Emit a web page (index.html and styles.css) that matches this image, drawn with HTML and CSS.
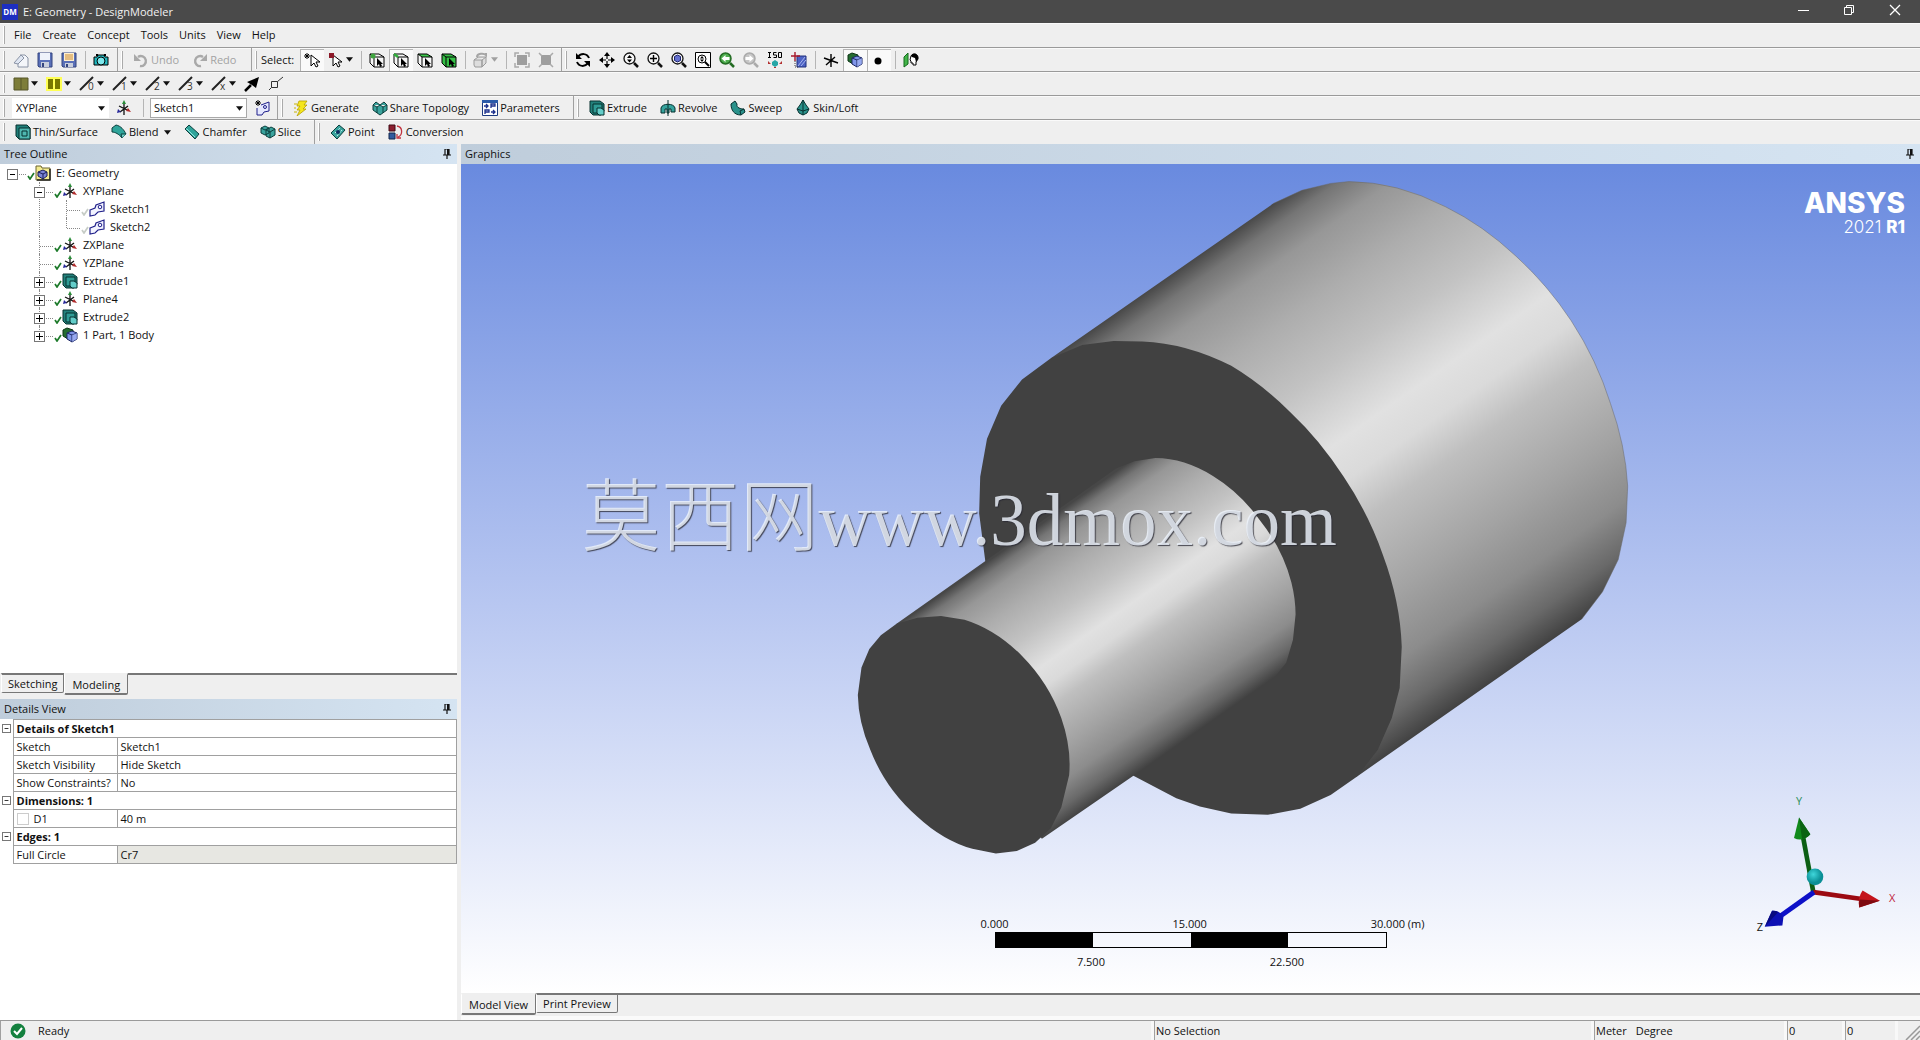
FILE: index.html
```html
<!DOCTYPE html>
<html lang="en">
<head>
<meta charset="utf-8">
<title>E: Geometry - DesignModeler</title>
<link rel="stylesheet" href="styles.css">
</head>
<body>
<svg class="sprite" aria-hidden="true">
  <defs>
    <symbol id="arrow" viewBox="0 0 8 5"><path d="M0 0h8L4 5z" fill="currentColor"/></symbol>
    <symbol id="new" viewBox="0 0 16 16"><path d="M7 3h5l3 3v9H5v-4" fill="#f4f6fa" stroke="#8a93a5"/><path d="M1 11 8 3l3 3-6 6z" fill="#dfe6f2" stroke="#8a93a5"/></symbol>
    <symbol id="save" viewBox="0 0 16 16"><path d="M1 1h14v14H2l-1-1z" fill="#5a70b8" stroke="#34457f"/><path d="M3 1h10v7H3z" fill="#eef2fa"/><path d="M4 10h8v5H4z" fill="#c9cfdd"/><path d="M5 11h2v4H5z" fill="#34457f"/></symbol>
    <symbol id="saveas" viewBox="0 0 16 16"><path d="M1 1h14v14H2l-1-1z" fill="#5a70b8" stroke="#34457f"/><path d="M3 1h10v8H3z" fill="#fff0cf"/><path d="M4 3h8M4 5h8M4 7h8" stroke="#c98a35"/><path d="M4 11h8v4H4z" fill="#c9cfdd"/><path d="M5 12h2v3H5z" fill="#34457f"/></symbol>
    <symbol id="camera" viewBox="0 0 16 16"><path d="M1 5h3l1-2h6l1 2h3v8H1z" fill="#20b6bd" stroke="#000"/><circle cx="8" cy="9" r="4" fill="#7de8ec" stroke="#000"/><path d="M3 3h2M11 3h2" stroke="#000" stroke-width="2"/></symbol>
    <symbol id="undo" viewBox="0 0 16 16"><path d="M5 5a5 5 0 1 1 2 9" fill="none" stroke="#a9a9a9" stroke-width="2.4"/><path d="M1 2v7h7z" fill="#a9a9a9"/></symbol>
    <symbol id="redo" viewBox="0 0 16 16"><path d="M11 5a5 5 0 1 0-2 9" fill="none" stroke="#a9a9a9" stroke-width="2.4"/><path d="M15 2v7H8z" fill="#a9a9a9"/></symbol>
    <symbol id="cursor" viewBox="0 0 16 16"><path d="M7 3v11l3-3 2 4 2-1-2-4h4z" fill="#fff" stroke="#000"/><path d="M3 1v6M0 4h6M1 2l4 4M5 2 1 6" stroke="#000"/></symbol>
    <symbol id="cursor-box" viewBox="0 0 16 16"><path d="M5 3v11l3-3 2 4 2-1-2-4h4z" fill="#fff" stroke="#000"/><path d="M1 1h5v5H1z" fill="#8c1828"/></symbol>
    <symbol id="wirecube" viewBox="0 0 16 16"><path d="M1 2 5 5h10v10H5l-4-4zM1 2h9l5 3M5 5v10" fill="none" stroke="#000"/></symbol>
    <symbol id="cube-pointer" viewBox="0 0 16 16"><path d="M8 6v8l2-2 1 3 2-1-1-2h2z" fill="#000"/></symbol>
    <symbol id="sel-vertex" viewBox="0 0 16 16"><path d="M1 2h9l5 3v10H5l-4-4z" fill="#f6f6f6"/><use href="#wirecube"/><use href="#cube-pointer"/><circle cx="4" cy="4" r="2.500" fill="#3ea53e"/></symbol>
    <symbol id="sel-edge" viewBox="0 0 16 16"><path d="M1 2h9l5 3v10H5l-4-4z" fill="#f6f6f6"/><use href="#wirecube"/><use href="#cube-pointer"/><path d="m1 2 4 3" stroke="#2fae3a" stroke-width="2.500"/></symbol>
    <symbol id="sel-face" viewBox="0 0 16 16"><path d="M1 2h9l5 3v10H5l-4-4z" fill="#f6f6f6"/><path d="M1 2h9l5 3H5z" fill="#3cc84c"/><use href="#wirecube"/><use href="#cube-pointer"/></symbol>
    <symbol id="sel-body" viewBox="0 0 16 16"><path d="M1 2h9l5 3v10H5l-4-4z" fill="#35c046"/><use href="#wirecube"/><use href="#cube-pointer"/></symbol>
    <symbol id="greycube" viewBox="0 0 16 16"><path d="M1 8h8v7H2l-1-2zM9 8l4-3v6l-4 4zM1 8l4-3h8" fill="#ddd" stroke="#9b9b9b"/><path d="M4 5c0-4 7-4 9-2V1" fill="none" stroke="#a5a5a5" stroke-width="2"/></symbol>
    <symbol id="expand" viewBox="0 0 16 16"><path d="M3 3h10v10H3z" fill="#9e9e9e"/><path d="M1 5V1h4M11 1h4v4M15 11v4h-4M5 15H1v-4" fill="none" stroke="#aaa" stroke-width="1.500"/></symbol>
    <symbol id="shrink" viewBox="0 0 16 16"><path d="M3 3h10v10H3z" fill="#9e9e9e"/><path d="m1 1 3 3M15 1l-3 3M15 15l-3-3M1 15l3-3" stroke="#aaa" stroke-width="1.500"/></symbol>
    <symbol id="rotate" viewBox="0 0 16 16"><path d="M14 6C12 1 6 1 3 5M2 10c2 5 8 5 11 1" fill="none" stroke="#000" stroke-width="2"/><path d="M1 1v6h6zM15 15V9H9z"/></symbol>
    <symbol id="pan" viewBox="0 0 16 16"><path d="M8 2v12M2 8h12" stroke="#000" stroke-width="1.200" stroke-dasharray="5 2"/><path d="m8 0 3 4H5zM8 16l3-4H5zM0 8l4-3v6zM16 8l-4-3v6z"/></symbol>
    <symbol id="lens" viewBox="0 0 16 16"><circle cx="6.500" cy="6.500" r="5.500" fill="#f7f7f7" stroke="currentColor" stroke-width="1.300"/><path d="m11 11 4 4" stroke="currentColor" stroke-width="2.500"/></symbol>
    <symbol id="zoom" viewBox="0 0 16 16"><use href="#lens"/><path d="m6.500 3 2.500 3H4zM6.500 10.500l2.500-3H4z"/></symbol>
    <symbol id="zoomin" viewBox="0 0 16 16"><use href="#lens"/><path d="M6.500 3v7M3 6.500h7" stroke="#000" stroke-width="1.400"/></symbol>
    <symbol id="zoomfit" viewBox="0 0 16 16"><use href="#lens"/><path d="m6.500 3 3 1.500v4l-3 1.500-3-1.500v-4z" fill="#6470cf" stroke="#1c2370"/></symbol>
    <symbol id="zoombox" viewBox="0 0 16 16"><path d="M.5.5h15v15H.5z" fill="#fff" stroke="#000"/><circle cx="7" cy="7" r="4" fill="none" stroke="#000"/><path d="m10 10 4 4" stroke="#000" stroke-width="2"/><path d="m7 4 2 2.500H5zM7 10l2-2.500H5z"/></symbol>
    <symbol id="zoomback" viewBox="0 0 16 16"><circle cx="6.500" cy="6.500" r="5.500" fill="#4fae4f" stroke="#236b23" stroke-width="1.500"/><path d="m11 11 4 4" stroke="#236b23" stroke-width="2.500"/><path d="m2.500 6.500 4-3.500v2h4v3h-4v2z" fill="#fff"/></symbol>
    <symbol id="zoomfwd" viewBox="0 0 16 16"><circle cx="6.500" cy="6.500" r="5.500" fill="#c6c6c6" stroke="#aaa" stroke-width="1.500"/><path d="m11 11 4 4" stroke="#aaa" stroke-width="2.500"/><path d="M10.500 6.500 6.500 3v2h-4v3h4v2z" fill="#fff"/></symbol>
    <symbol id="iso" viewBox="0 0 16 16"><path d="M1 .5h3M1 5.500h3M2.500 0v6M9.500.5h-3v2.500h3v2.500h-3M11.500.5h3v5h-3z" fill="none" stroke="#000"/><path d="m8 8 3 2v3l-3 2-3-2v-3z" fill="#26a7a7"/><path d="M1 9v3h3zM12 12h3V9zM7 15h2v1H7z" fill="#b33030"/></symbol>
    <symbol id="lookat" viewBox="0 0 16 16"><path d="M6 4h9v11H6z" fill="#4c62c4" stroke="#20307c"/><path d="m7 14 7-9M10 14l5-6" stroke="#a9b6ee"/><path d="M4 0v9M0 4h9" stroke="#a8192c" stroke-width="1.400"/><path d="M4 9v6h3" fill="none" stroke="#444" stroke-dasharray="1 1"/></symbol>
    <symbol id="axes-black" viewBox="0 0 16 16"><path d="M8 2v13M1 6l14 5M3 13l9-8" stroke="#000" stroke-width="1.400"/></symbol>
    <symbol id="parts" viewBox="0 0 16 16"><path d="M1 3 5 1l6 2v7l-5 2-5-3z" fill="#246b31" stroke="#0c3515"/><path d="m5 6 5-2 5 2v6l-5 3-5-3z" fill="#7f95e8" stroke="#1c2765"/><path d="m5 6 5 2 5-2M10 8v7" fill="none" stroke="#1c2765"/><path d="m10 8 5-2v6l-5 3z" fill="#a9b9f6" fill-opacity=".6"/></symbol>
    <symbol id="dot" viewBox="0 0 16 16"><circle cx="7" cy="9" r="3.500"/></symbol>
    <symbol id="face-view" viewBox="0 0 16 16"><path d="m1 5 4-4v11l-4 3z" fill="#43b549" stroke="#156b1d"/><path d="M8 4c2-4 8-2 7 3l-2 3v3h-3v-2H8V9l-1-1z" fill="#fff" stroke="#000"/><path d="M8 4c2-4 8-2 7 3l-2 3-1-4-3-1z"/></symbol>
    <symbol id="olive" viewBox="0 0 16 16"><path d="M1 2h14v12H1z" fill="#7d7d39" stroke="#57572a"/><path d="M8 2v12" stroke="#57572a"/></symbol>
    <symbol id="olive-y" viewBox="0 0 16 16"><path d="M0 1h16v14H0z" fill="#ffff55"/><path d="M2 3h5v10H2zM9 3h5v10H9z" fill="#777700"/></symbol>
    <symbol id="slash" viewBox="0 0 16 16"><path d="M1 14 14 1" stroke="#222" stroke-width="2"/></symbol>
    <symbol id="dart" viewBox="0 0 16 16"><path d="m1 15 6-6" stroke="#000" stroke-width="2.500"/><path d="M15 1 12 12 8 9 3 6z"/></symbol>
    <symbol id="node" viewBox="0 0 16 16"><path d="M3.500 5.500h6v6h-6zM9.500 5.500 15 1M1 14l2.500-2.500" fill="none" stroke="#333"/></symbol>
    <symbol id="axes" viewBox="0 0 16 16"><path d="M8 3v12M3 6l8 4M4 12l8-6" stroke="#111" stroke-width="1.300"/><path d="m8 0 2 4H6z" fill="#2a8c38"/><path d="m15 12-5-1 2-3z" fill="#b02a2a"/><path d="m1 13 1-4 3 3z" fill="#28289a"/></symbol>
    <symbol id="newsketch" viewBox="0 0 16 16"><path d="m7 5 8-3v9l-5 1-2 3H3V8" fill="#e5e8ff" stroke="#20208a"/><circle cx="11" cy="7" r="1.500" fill="none" stroke="#20208a"/><path d="M4 0v6M1 3h6M2 1l4 4M6 1 2 5" stroke="#000"/></symbol>
    <symbol id="sketch" viewBox="0 0 16 16"><path d="M1 9l5-2 1-3 8-3v9l-6 1-3 3-5 1z" fill="#f3f4ff" stroke="#20208a" stroke-width="1.200"/><circle cx="11" cy="6" r="1.800" fill="none" stroke="#20208a"/></symbol>
    <symbol id="bolt" viewBox="0 0 16 16"><path d="M6 1h8l-3 4h3l-4 4h3l-9 7 3-6H4l3-4H4z" fill="#f5e61c" stroke="#b59e00" stroke-width=".8"/><path d="M1 4h3M1 8h2M1 12h3" stroke="#c8b400"/></symbol>
    <symbol id="share" viewBox="0 0 16 16"><path d="m1 5 3-3 4 3 4-3 3 3v5l-7 5-7-5zM1 5l4 2 3-2 3 2 4-2M5 7v6M11 7v6" fill="#3aa39d" stroke="#0b3f3d"/></symbol>
    <symbol id="params" viewBox="0 0 16 16"><path d="M.5.5h15v15H.5z" fill="#fff" stroke="#1c3a80"/><path d="M0 0h16v3H0z" fill="#2b5aa8"/><path d="M2 6h4M4 4l2 2-2 2M9 8V4h4v2H9M3 14v-4h4v2H3M9 12h4m-2-2 2 2-2 2" fill="none" stroke="#1b2f8c" stroke-width="1.300"/></symbol>
    <symbol id="extrude" viewBox="0 0 16 16"><path d="M1 1h10l4 3v7l-3 4H4l-3-3z" fill="#23807b" stroke="#06302f"/><path d="M4 4h9v9H4z" fill="#2f9c95" stroke="#06302f"/><path d="M8 8h4l3 2v5h-5l-2-2z" fill="#63cdc9" stroke="#06302f"/></symbol>
    <symbol id="thin" viewBox="0 0 16 16"><path d="M1 1h11l3 3v11H4l-3-3z" fill="#1f7f79" stroke="#06302f"/><path d="M4 4h11v11H4zM7 7h5v5H7z" fill="#4fb7b0" stroke="#06302f"/></symbol>
    <symbol id="revolve" viewBox="0 0 16 16"><path d="M1 8c1-5 13-5 14 0v4h-4V9H9v4H7V9H5v4H1z" fill="#35a39d" stroke="#06302f"/><path d="M8 0v16" stroke="#06302f"/></symbol>
    <symbol id="sweep" viewBox="0 0 16 16"><path d="m1 4 4-3 2 3c-1 4 4 5 7 5l1 3-4 3C4 15 1 10 1 4z" fill="#2a928b" stroke="#06302f"/><path d="m11 15-1-4 4-2" fill="none" stroke="#06302f"/></symbol>
    <symbol id="loft" viewBox="0 0 16 16"><path d="m8 0 3 5 3 4-2 4-4 2-4-2-2-4 3-4z" fill="#2a928b" stroke="#06302f"/><path d="M8 0v15M2 9l6 2 6-2" fill="none" stroke="#06302f"/></symbol>
    <symbol id="blend" viewBox="0 0 16 16"><path d="m1 4 4-3c5 1 8 5 10 9l-4 4C8 10 4 8 1 8z" fill="#2fa49a" stroke="#0b3f3d"/><path d="m11 14-1-4h5" fill="#74d6cf" stroke="#0b3f3d"/></symbol>
    <symbol id="chamfer" viewBox="0 0 16 16"><path d="m1 5 4-4 10 9-4 5z" fill="#2fa49a" stroke="#0b3f3d"/><path d="M2 5h1l8 8" fill="none" stroke="#8fe3dc"/></symbol>
    <symbol id="slice" viewBox="0 0 16 16"><path d="m1 4 4-2 4 2v5l-4 2-4-2zM6 6l5-3 4 2v6l-5 3-4-2z" fill="#3aa39d" stroke="#0b3f3d"/><path d="m1 4 4 2 4-2M6 6l4 2 5-3M10 8v6" fill="none" stroke="#0b3f3d"/></symbol>
    <symbol id="point" viewBox="0 0 16 16"><path d="m1 9 8-8 6 5-8 9z" fill="#3aa39d" stroke="#0b3f3d"/><path d="m5 9 5-5M7 12l5-6" stroke="#c5f2ee" stroke-dasharray="2 1"/><circle cx="8" cy="8" r="2" fill="#0c2c60"/></symbol>
    <symbol id="conversion" viewBox="0 0 16 16"><path d="M1 1h6v6H1z" fill="#8c1f30" stroke="#410a14"/><path d="M1 9h6v6H1z" fill="#315a9e" stroke="#14264c"/><path d="M9 2c6 1 6 9 1 11M13 14H9v-4" fill="none" stroke="#c23440" stroke-width="1.300"/></symbol>
    <symbol id="model" viewBox="0 0 16 16"><path d="M1 3V1h5l1 2h8v12H1z" fill="#f3eb8f" stroke="#6b6430"/><path d="M2 15h13V4" fill="none" stroke="#222" stroke-width="1.500"/><path d="m3 7 5-2 4 2v4l-4 3-5-3z" fill="#7b84d6" stroke="#1a1f5a"/><path d="m3 7 5 2 4-2M8 9v5" fill="none" stroke="#1a1f5a"/></symbol>
    <symbol id="check" viewBox="0 0 8 8"><path d="m1 4 2 3 4-6" fill="none" stroke="currentColor" stroke-width="1.700"/></symbol>
    <symbol id="pin" viewBox="0 0 8 10"><path d="M2 0h4v6H2zM0 6h8M4 6v4" fill="none" stroke="#111" stroke-width="1.200"/><path d="M4 0h2v6H4z" fill="#111"/></symbol>
    <symbol id="minus" viewBox="0 0 9 9"><path d="M2 4.500h5" stroke="#000"/></symbol>
    <symbol id="plus" viewBox="0 0 9 9"><path d="M1 4.500h7M4.500 1v7" stroke="#000"/></symbol>
  </defs>
</svg>

<div class="app">
  <header class="titlebar">
    <span class="app-badge">DM</span>
    <h1>E: Geometry - DesignModeler</h1>
    <div class="window-buttons">
      <button aria-label="Minimize"><svg viewBox="0 0 12 12"><path d="M1 6.500h11" stroke="#fff"/></svg></button>
      <button aria-label="Restore"><svg viewBox="0 0 12 12"><path d="M1.500 3.500h7v7h-7zM3.500 3V1.500h7v7H9" fill="none" stroke="#fff"/></svg></button>
      <button aria-label="Close"><svg viewBox="0 0 12 12"><path d="m1 1 10 10M11 1 1 11" stroke="#fff" stroke-width="1.300"/></svg></button>
    </div>
  </header>

  <nav class="bar menubar">
    <span class="grip"></span>
    <button>File</button><button>Create</button><button>Concept</button><button>Tools</button><button>Units</button><button>View</button><button>Help</button>
  </nav>

  <div class="bar">
    <div class="group">
      <span class="grip"></span>
      <button class="tool" aria-label="New"><svg><use href="#new"/></svg></button>
      <button class="tool" aria-label="Save"><svg><use href="#save"/></svg></button>
      <button class="tool" aria-label="Save as"><svg><use href="#saveas"/></svg></button>
      <span class="sep"></span>
      <button class="tool" aria-label="Capture"><svg><use href="#camera"/></svg></button>
    </div>
    <div class="group group-history">
      <span class="grip"></span>
      <button class="label-tool" disabled><svg><use href="#undo"/></svg>Undo</button>
      <button class="label-tool" disabled><svg><use href="#redo"/></svg>Redo</button>
    </div>
    <div class="group group-select">
      <span class="grip"></span>
      <span class="caption">Select:</span>
      <button class="tool pressed" aria-label="New selection"><svg><use href="#cursor"/></svg></button>
      <button class="drop-tool" aria-label="Selection mode"><svg><use href="#cursor-box"/></svg><svg class="arrow"><use href="#arrow"/></svg></button>
      <span class="sep"></span>
      <button class="tool" aria-label="Vertices"><svg><use href="#sel-vertex"/></svg></button>
      <button class="tool pressed" aria-label="Edges"><svg><use href="#sel-edge"/></svg></button>
      <button class="tool" aria-label="Faces"><svg><use href="#sel-face"/></svg></button>
      <button class="tool" aria-label="Bodies"><svg><use href="#sel-body"/></svg></button>
      <span class="sep"></span>
      <button class="drop-tool faded" aria-label="Extend selection"><svg><use href="#greycube"/></svg><svg class="arrow"><use href="#arrow"/></svg></button>
      <span class="sep"></span>
      <button class="tool" aria-label="Expand blend"><svg><use href="#expand"/></svg></button>
      <button class="tool" aria-label="Shrink"><svg><use href="#shrink"/></svg></button>
    </div>
    <div class="group group-last">
      <span class="grip"></span>
      <button class="tool" aria-label="Rotate"><svg><use href="#rotate"/></svg></button>
      <button class="tool" aria-label="Pan"><svg><use href="#pan"/></svg></button>
      <button class="tool" aria-label="Zoom"><svg><use href="#zoom"/></svg></button>
      <button class="tool" aria-label="Box zoom"><svg><use href="#zoomin"/></svg></button>
      <button class="tool" aria-label="Zoom to fit"><svg><use href="#zoomfit"/></svg></button>
      <button class="tool" aria-label="Magnifier"><svg><use href="#zoombox"/></svg></button>
      <button class="tool" aria-label="Previous view"><svg><use href="#zoomback"/></svg></button>
      <button class="tool" aria-label="Next view"><svg><use href="#zoomfwd"/></svg></button>
      <button class="tool" aria-label="Isometric view"><svg><use href="#iso"/></svg></button>
      <button class="tool" aria-label="Look at face"><svg><use href="#lookat"/></svg></button>
      <span class="sep"></span>
      <button class="tool" aria-label="Display plane"><svg><use href="#axes-black"/></svg></button>
      <button class="tool pressed" aria-label="Display model"><svg><use href="#parts"/></svg></button>
      <button class="tool pressed" aria-label="Display points"><svg><use href="#dot"/></svg></button>
      <span class="sep"></span>
      <button class="tool" aria-label="Look at"><svg><use href="#face-view"/></svg></button>
    </div>
  </div>

  <div class="bar">
    <div class="group group-last">
      <span class="grip"></span>
      <button class="drop-tool" aria-label="Face color"><svg><use href="#olive"/></svg><svg class="arrow"><use href="#arrow"/></svg></button>
      <button class="drop-tool" aria-label="Edge color"><svg><use href="#olive-y"/></svg><svg class="arrow"><use href="#arrow"/></svg></button>
      <button class="drop-tool"><svg><use href="#slash"/></svg><span class="digit">0</span><svg class="arrow"><use href="#arrow"/></svg></button>
      <button class="drop-tool"><svg><use href="#slash"/></svg><span class="digit">1</span><svg class="arrow"><use href="#arrow"/></svg></button>
      <button class="drop-tool"><svg><use href="#slash"/></svg><span class="digit">2</span><svg class="arrow"><use href="#arrow"/></svg></button>
      <button class="drop-tool"><svg><use href="#slash"/></svg><span class="digit">3</span><svg class="arrow"><use href="#arrow"/></svg></button>
      <button class="drop-tool"><svg><use href="#slash"/></svg><span class="digit">x</span><svg class="arrow"><use href="#arrow"/></svg></button>
      <button class="tool" aria-label="Edge direction"><svg><use href="#dart"/></svg></button>
      <button class="tool" aria-label="Vertices"><svg><use href="#node"/></svg></button>
    </div>
  </div>

  <div class="bar">
    <div class="group group-plane">
      <span class="grip"></span>
      <span class="combo flat"><select aria-label="Active plane"><option>XYPlane</option></select><svg class="arrow"><use href="#arrow"/></svg></span>
      <button class="tool" aria-label="New plane"><svg><use href="#axes"/></svg></button>
      <span class="sep"></span>
      <span class="combo"><select aria-label="Active sketch"><option>Sketch1</option></select><svg class="arrow"><use href="#arrow"/></svg></span>
      <button class="tool" aria-label="New sketch"><svg><use href="#newsketch"/></svg></button>
    </div>
    <div class="group group-generate">
      <span class="grip"></span>
      <button class="label-tool"><svg><use href="#bolt"/></svg>Generate</button>
      <button class="label-tool"><svg><use href="#share"/></svg>Share Topology</button>
      <button class="label-tool"><svg><use href="#params"/></svg>Parameters</button>
    </div>
    <div class="group group-last">
      <span class="grip"></span>
      <button class="label-tool"><svg><use href="#extrude"/></svg>Extrude</button>
      <button class="label-tool"><svg><use href="#revolve"/></svg>Revolve</button>
      <button class="label-tool"><svg><use href="#sweep"/></svg>Sweep</button>
      <button class="label-tool"><svg><use href="#loft"/></svg>Skin/Loft</button>
    </div>
  </div>

  <div class="bar bar-end">
    <div class="group group-features">
      <span class="grip"></span>
      <button class="label-tool"><svg><use href="#thin"/></svg>Thin/Surface</button>
      <button class="label-tool"><svg><use href="#blend"/></svg>Blend<svg class="arrow"><use href="#arrow"/></svg></button>
      <button class="label-tool"><svg><use href="#chamfer"/></svg>Chamfer</button>
      <button class="label-tool"><svg><use href="#slice"/></svg>Slice</button>
    </div>
    <div class="group group-last">
      <span class="grip"></span>
      <button class="label-tool"><svg><use href="#point"/></svg>Point</button>
      <button class="label-tool"><svg><use href="#conversion"/></svg>Conversion</button>
    </div>
  </div>

  <main class="workspace">
    <aside class="side">
      <h2 class="panel-title">Tree Outline<svg><use href="#pin"/></svg></h2>
      <div class="tree-panel">
        <ul class="tree">
          <li>
            <div class="row"><button class="twisty" aria-label="Collapse"><svg><use href="#minus"/></svg></button><svg class="tick"><use href="#check"/></svg><svg class="kind"><use href="#model"/></svg>E: Geometry</div>
            <ul>
              <li>
                <div class="row"><button class="twisty" aria-label="Collapse"><svg><use href="#minus"/></svg></button><svg class="tick"><use href="#check"/></svg><svg class="kind"><use href="#axes"/></svg>XYPlane</div>
                <ul>
                  <li><div class="row"><svg class="tick pale"><use href="#check"/></svg><svg class="kind"><use href="#sketch"/></svg>Sketch1</div></li>
                  <li><div class="row"><svg class="tick pale"><use href="#check"/></svg><svg class="kind"><use href="#sketch"/></svg>Sketch2</div></li>
                </ul>
              </li>
              <li><div class="row"><svg class="tick"><use href="#check"/></svg><svg class="kind"><use href="#axes"/></svg>ZXPlane</div></li>
              <li><div class="row"><svg class="tick"><use href="#check"/></svg><svg class="kind"><use href="#axes"/></svg>YZPlane</div></li>
              <li><div class="row"><button class="twisty" aria-label="Expand"><svg><use href="#plus"/></svg></button><svg class="tick"><use href="#check"/></svg><svg class="kind"><use href="#extrude"/></svg>Extrude1</div></li>
              <li><div class="row"><button class="twisty" aria-label="Expand"><svg><use href="#plus"/></svg></button><svg class="tick"><use href="#check"/></svg><svg class="kind"><use href="#axes"/></svg>Plane4</div></li>
              <li><div class="row"><button class="twisty" aria-label="Expand"><svg><use href="#plus"/></svg></button><svg class="tick"><use href="#check"/></svg><svg class="kind"><use href="#extrude"/></svg>Extrude2</div></li>
              <li><div class="row"><button class="twisty" aria-label="Expand"><svg><use href="#plus"/></svg></button><svg class="tick"><use href="#check"/></svg><svg class="kind"><use href="#parts"/></svg>1 Part, 1 Body</div></li>
            </ul>
          </li>
        </ul>
      </div>
      <div class="tabs side-tabs">
        <button class="tab">Sketching</button><button class="tab active">Modeling</button><span class="tab-rest"></span>
      </div>
      <h2 class="panel-title">Details View<svg><use href="#pin"/></svg></h2>
      <div class="details">
        <table>
          <colgroup><col class="col-twisty"><col class="col-name"><col></colgroup>
          <tr><td class="gutter"><button class="twisty" aria-label="Collapse"><svg><use href="#minus"/></svg></button></td><th colspan="2">Details of Sketch1</th></tr>
          <tr><td class="gutter"></td><td>Sketch</td><td>Sketch1</td></tr>
          <tr><td class="gutter"></td><td>Sketch Visibility</td><td>Hide Sketch</td></tr>
          <tr><td class="gutter"></td><td>Show Constraints?</td><td>No</td></tr>
          <tr><td class="gutter"><button class="twisty" aria-label="Collapse"><svg><use href="#minus"/></svg></button></td><th colspan="2">Dimensions: 1</th></tr>
          <tr><td class="gutter"></td><td><label><input type="checkbox">D1</label></td><td>40 m</td></tr>
          <tr><td class="gutter"><button class="twisty" aria-label="Collapse"><svg><use href="#minus"/></svg></button></td><th colspan="2">Edges: 1</th></tr>
          <tr><td class="gutter"></td><td>Full Circle</td><td class="readonly">Cr7</td></tr>
        </table>
      </div>
    </aside>

    <section class="graphics">
      <h2 class="panel-title">Graphics<svg><use href="#pin"/></svg></h2>
      <div class="viewport">
        <svg class="solid" viewBox="0 4 820 716" aria-label="Stepped shaft model">
          <defs>
            <linearGradient id="metal" gradientUnits="userSpaceOnUse" x1="368" y1="461" x2="1041" y2="1304">
              <stop offset="0" stop-color="#474747"/><stop offset=".04" stop-color="#757575"/><stop offset=".1" stop-color="#979797"/><stop offset=".2" stop-color="#adadad"/><stop offset=".32" stop-color="#c2c2c2"/><stop offset=".45" stop-color="#e1e1e1"/><stop offset=".52" stop-color="#dadada"/><stop offset=".6" stop-color="#bfbfbf"/><stop offset=".75" stop-color="#a3a3a3"/><stop offset=".86" stop-color="#8c8c8c"/><stop offset=".94" stop-color="#696969"/><stop offset="1" stop-color="#414141"/>
            </linearGradient>
            <linearGradient id="metal-small" href="#metal" x1="537" y1="673" x2="873" y2="1094"/>
          </defs>
          <g transform="scale(.523 .4592)">
            <path fill="url(#metal)" d="M405 432 830 95 885 66 940 51 975 47A540 370 66 0 1 1160 102 540 370 66 0 1 1295 210 540 370 66 0 1 1400 350 540 370 66 0 1 1475 530 540 370 66 0 1 1508 710L1505 790 1490 870 1460 940 1420 1000 990 1343 600 1000z"/>
            <path fill="none" stroke="#666" d="M830 95 885 66 940 51 975 47A540 370 66 0 1 1160 102 540 370 66 0 1 1295 210 540 370 66 0 1 1400 350 540 370 66 0 1 1475 530 540 370 66 0 1 1508 710L1505 790 1490 870 1460 940 1420 1000"/>
            <path fill="#414141" d="M405 432 465 403 525 394 580 395A540 370 66 0 1 750 448 540 370 66 0 1 862 548 540 370 66 0 1 965 690 540 370 66 0 1 1040 860 540 370 66 0 1 1076 1060L1072 1150 1057 1215 1030 1285 990 1343 940 1383 882 1413 820 1426 750 1423 690 1408 645 1390 563 1341 400 1150 280 876 268 770 270 690 283 607 310 535 350 478z"/>
            <path fill="url(#metal-small)" d="M110 1010 530 672 565 656 605 649A270 185 66 0 1 715 688 270 185 66 0 1 805 785 270 185 66 0 1 865 920 270 185 66 0 1 873 990L868 1045 855 1095 830 1130 800 1155 388 1478 200 1250z"/>
            <path fill="#414141" d="M110 1010 150 997 195 993 240 1001A270 185 66 0 1 350 1080 270 185 66 0 1 425 1215 270 185 66 0 1 440 1340L425 1410 405 1455 375 1487 340 1505 300 1510 255 1500A270 185 66 0 1 150 1430 270 185 66 0 1 60 1285 270 185 66 0 1 36 1165L43 1105 58 1065 80 1035z"/>
          </g>
        </svg>
        <div class="watermark"><span class="watermark-han" lang="zh">莫西网</span><span>www.3dmox.com</span></div>
        <div class="brand"><strong>ANSYS</strong><span>2021 <b>R1</b></span></div>
        <div class="ruler">
          <div class="ruler-labels top"><span>0.000</span><span>15.000</span><span>30.000 (m)</span></div>
          <div class="ruler-bar"><i></i><i></i><i></i><i></i></div>
          <div class="ruler-labels"><span>7.500</span><span>22.500</span></div>
        </div>
        <svg class="triad" viewBox="0 0 660 640" aria-label="Axis triad">
          <defs><radialGradient id="ball" cx=".4" cy=".35"><stop offset="0" stop-color="#3fd6da"/><stop offset="1" stop-color="#0a8f96"/></radialGradient></defs>
          <path d="M340 337 308 165" stroke="#0c5f14" stroke-width="14"/>
          <path d="M297 113 331 163Q306 188 282 174z" fill="#118a1c"/><path d="M297 113 331 163Q320 176 306 177z" fill="#0b6413"/>
          <circle cx="345" cy="291" r="25" fill="url(#ball)"/>
          <path d="m340 337 140 20" stroke="#9c0a12" stroke-width="14"/>
          <path d="m540 363-52-31q-16 22-10 51z" fill="#c4141c"/><path d="m540 363-62 20q-2-14 1-24z" fill="#7e0a10"/>
          <path d="m342 337-104 74" stroke="#0d10c8" stroke-width="15"/>
          <path d="m194 441 22-48q24-3 34 20l-3 24z" fill="#0d10b4"/><path d="m194 441 22-48q12-1 18 4z" fill="#080a80"/>
          <text x="288" y="76" fill="#2d8f5a">Y</text><text x="567" y="368" fill="#c0243c">X</text><text x="170" y="455" fill="#111">Z</text>
        </svg>
      </div>
      <div class="tabs view-tabs">
        <button class="tab active">Model View</button><button class="tab">Print Preview</button><span class="tab-rest"></span>
      </div>
    </section>
  </main>

  <footer class="statusbar">
    <div class="cell ready"><svg viewBox="0 0 16 16"><circle cx="8" cy="8" r="7.500" fill="#14813f"/><path d="m4 8 3 3 5-6" fill="none" stroke="#fff" stroke-width="2"/></svg>Ready</div>
    <div class="cell">No Selection</div>
    <div class="cell units"><span>Meter</span><span>Degree</span></div>
    <div class="cell">0</div>
    <div class="cell">0</div>
    <svg class="resize" viewBox="0 0 16 16"><path d="M2 16 16 2M7 16l9-9M12 16l4-4" stroke="#999" stroke-width="1.500"/></svg>
  </footer>
</div>
</body>
</html>
```

FILE: styles.css
```css
* { box-sizing: border-box; }

body {
  margin: 0;
  font: 11px/16px "Open Sans", "Noto Sans", "Noto Sans CJK SC", sans-serif;
  color: #111;
  background: #efefef;
}

button, select, input { font: inherit; color: inherit; margin: 0; }
button { border: 0; padding: 0; background: none; }
h1, h2 { margin: 0; font-size: inherit; font-weight: 400; }
ul { list-style: none; margin: 0; padding: 0; }
.sprite { position: absolute; width: 0; height: 0; }

.app { display: flex; flex-direction: column; height: 100vh; }

/* title bar */
.titlebar {
  display: flex;
  align-items: center;
  height: 23px;
  padding-left: 2px;
  gap: 5px;
  background: #4a4a4a;
  color: #f2f2f2;
}
.app-badge {
  width: 16px;
  height: 16px;
  background: #1d2fc0;
  color: #fff;
  font-size: 8px;
  font-weight: 700;
  text-align: center;
}
.window-buttons { display: flex; margin-left: auto; padding-right: 2px; }
.window-buttons button { width: 46px; height: 22px; }
.window-buttons svg { width: 12px; height: 12px; }

/* menu and tool bars */
.bar {
  display: flex;
  height: 24px;
  border-bottom: 1px solid #9a9a9a;
  box-shadow: inset 0 1px #fafafa;
}
.bar-end { border-bottom: 0; }
.menubar { height: 25px; align-items: center; padding-left: 0; }
.menubar button { padding: 0 6px 0 5px; }
.grip {
  flex: none;
  width: 9px;
  height: 18px;
  background: linear-gradient(#aaa, #aaa) 4px 0 / 1px 100% no-repeat,
              linear-gradient(#fff, #fff) 3px 0 / 1px 100% no-repeat;
}
.group { display: flex; align-items: center; width: 118px; border-right: 1px solid #a0a0a0; }
.group-history { width: 134px; }
.group-select { width: 310px; }
.group-plane { width: 278px; gap: 3px; }
.group-generate { width: 296px; }
.group-features { width: 315px; }
.group-last { width: auto; border-right: 0; }
.sep {
  flex: none;
  width: 8px;
  height: 18px;
  background: linear-gradient(#b5b5b5, #b5b5b5) 4px 0 / 1px 100% no-repeat;
}
.caption { width: 39px; white-space: nowrap; }
.tool { display: flex; flex: none; align-items: center; justify-content: center; width: 24px; height: 22px; }
.tool svg, .label-tool svg, .drop-tool svg { flex: none; width: 16px; height: 16px; }
.pressed { background: #fafafa; box-shadow: inset 1px 1px #b5b5b5; }
.drop-tool { position: relative; display: flex; flex: none; align-items: center; gap: 2px; width: 33px; padding-left: 4px; }
.faded { color: #a0a0a0; }
.tool svg.arrow, .label-tool svg.arrow, .drop-tool svg.arrow, svg.arrow { flex: none; width: 7px; height: 5px; }
.digit { position: absolute; left: 13px; top: 4px; font-size: 10px; line-height: 12px; color: #333; }
.label-tool { display: flex; align-items: center; gap: 2px; padding: 0 7px 0 6px; white-space: nowrap; }
.label-tool svg.arrow { margin-left: 4px; }
.label-tool:disabled { color: #a3a3a3; }
.combo { position: relative; display: flex; flex: none; align-items: center; width: 97px; height: 20px; border: 1px solid #a9a9a9; background: #fff; }
.combo.flat { border-color: #fff; }
.combo select { flex: 1; min-width: 0; height: 18px; border: 0; padding: 0 3px; appearance: none; background: none; }
.combo .arrow { position: absolute; right: 3px; top: 7px; }

/* panels */
.workspace { display: flex; flex: 1; min-height: 0; }
.side { display: flex; flex-direction: column; width: 457px; background: #fff; }
.panel-title {
  display: flex;
  flex: none;
  align-items: center;
  justify-content: space-between;
  height: 20px;
  padding: 0 6px 0 4px;
  background: linear-gradient(90deg, #bfcddb, #d5e4f2);
}
.panel-title svg { width: 8px; height: 10px; }
.tree-panel { flex: none; height: 509px; overflow: auto; }

/* tree */
.tree li { position: relative; }
.tree ul { padding-left: 27px; }
.tree ul li::before {
  content: "";
  position: absolute;
  left: 12px;
  top: 0;
  bottom: 0;
  border-left: 1px dotted #888;
}
.tree ul li:last-child::before { bottom: auto; height: 10px; }
.row {
  position: relative;
  display: flex;
  align-items: center;
  height: 18px;
  padding-left: 27px;
  white-space: nowrap;
}
.row::before { content: ""; position: absolute; left: 13px; top: 10px; width: 13px; border-top: 1px dotted #888; }
.twisty {
  display: block;
  width: 11px;
  height: 11px;
  border: 1px solid #777;
  background: #fff;
}
.twisty svg { display: block; width: 100%; height: 100%; }
.row .twisty { position: absolute; left: 7px; top: 5px; }
.tick { width: 8px; height: 8px; margin-top: 6px; color: #1d7a2a; }
.tick.pale { color: #c6ccc6; }
.kind { width: 16px; height: 16px; margin-right: 5px; }

/* tabs */
.tabs { display: flex; flex: none; align-items: flex-start; background: #efefef; }
.tab { height: 20px; padding: 0 6px; border: 1px solid #777; border-top: 2px solid #777; border-left-color: #fff; border-radius: 0 0 2px 2px; }
.tab.active { height: 22px; padding: 2px 7px 0; border-top-color: transparent; border-bottom-width: 2px; }
.tab-rest { flex: 1; border-top: 2px solid #777; }
.side-tabs { height: 26px; padding-left: 1px; }

/* details */
.details { flex: 1; background: #fff; }
.details table { width: 100%; border-collapse: collapse; table-layout: fixed; }
.col-twisty { width: 13px; }
.col-name { width: 104px; }
.details td, .details th {
  height: 18px;
  padding: 0 3px;
  border: 1px solid #a0a0a0;
  line-height: 16px;
  text-align: left;
  white-space: nowrap;
}
.details .gutter { padding: 0 2px; border: 0; }
.details .twisty { width: 9px; height: 9px; }
.details .readonly { background: #e7e7e2; }
.details label { display: flex; align-items: center; gap: 5px; }
.details input { appearance: none; width: 12px; height: 12px; border: 1px solid #ccc; background: #fff; }

/* graphics */
.graphics { display: flex; flex: 1; flex-direction: column; min-width: 0; margin-left: 4px; }
.viewport {
  position: relative;
  flex: 1;
  overflow: hidden;
  background: linear-gradient(#698adf, #b3c3f0 50%, #fff);
}
.solid { position: absolute; left: calc(50% - 352px); top: 0; width: 820px; height: 716px; }
.watermark {
  position: absolute;
  left: calc(50% - 609px);
  top: 299px;
  display: flex;
  align-items: baseline;
  font: 73px/96px "Liberation Serif", serif;
  color: rgba(240, 246, 255, .82);
  text-shadow: 1px 1px 1px rgba(40, 40, 50, .8);
  white-space: nowrap;
}
.watermark-han { font: 300 79px/96px "Noto Sans CJK SC", sans-serif; }
.brand {
  position: absolute;
  right: 15px;
  top: 24px;
  display: flex;
  flex-direction: column;
  align-items: flex-end;
  color: #fff;
  font: 300 17px/18px Inter, sans-serif;
}
.brand strong { font-size: 28px; font-weight: 800; line-height: 30px; }
.brand b { font-weight: 800; }
.ruler { position: absolute; left: calc(50% - 196px); bottom: 18px; width: 392px; }
.ruler-labels { display: flex; justify-content: space-around; align-items: center; height: 27px; }
.ruler-labels.top { justify-content: space-between; height: 16px; margin: 0 -38px 0 -14px; }
.ruler-bar { display: flex; height: 16px; border: 1px solid #000; }
.ruler-bar i { flex: 1; }
.ruler-bar i:nth-child(odd) { background: #000; }
.triad { position: absolute; right: 0; bottom: 0; width: 220px; height: 213px; font-size: 33px; }
.view-tabs { height: 27px; border-bottom: 4px solid #fafafa; }

/* status bar */
.statusbar {
  display: grid;
  grid-template-columns: 1fr 440px 193px 58px 53px 22px;
  height: 20px;
  border-top: 1px solid #9a9a9a;
}
.cell { display: flex; align-items: center; padding-left: 1px; border-left: 1px solid #a0a0a0; border-right: 3px solid #f8f8f8; }
.ready { gap: 12px; padding-left: 9px; }
.ready svg { width: 16px; height: 16px; }
.units { gap: 9px; }
.resize { width: 16px; height: 16px; align-self: end; justify-self: end; }
```
